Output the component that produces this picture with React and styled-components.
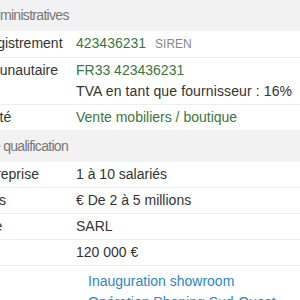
import React from "react";
import styled, { createGlobalStyle } from "styled-components";

const GlobalStyle = createGlobalStyle`
    html, body {
        margin: 0;
        padding: 0;
        background: #fff;
        overflow: hidden;
    }
    body {
        font-family: "Liberation Sans", Arial, Helvetica, sans-serif;
        font-size: 14px;
        line-height: 21px;
        color: #333;
    }
`;

const Sheet = styled.div`
    margin-left: -103px;
    width: 420px;
`;

const SectionHeader = styled.div`
    background: #f2f2f2;
    color: #777;
    font-size: 14px;
    letter-spacing: -0.7px;
    padding: 5px 17px;
    line-height: 21px;
    white-space: nowrap;
`;

const Row = styled.div`
    display: grid;
    grid-template-columns: 171px 1fr;
    border-bottom: 1px solid #eeeeee;
`;

const Label = styled.div`
    padding: 2px 8px;
    white-space: nowrap;
`;

const Value = styled.div`
    padding: 2px 8px;
    white-space: nowrap;
    color: ${(p) => (p.$green ? "#3c763d" : "#333")};
`;

const Muted = styled.span`
    margin-left: 9px;
    font-size: 12px;
    color: #888;
`;

const Plain = styled.div`
    color: #333;
    letter-spacing: 0.12px;
`;

const LinkList = styled.ul`
    margin: 0;
    padding: 3px 0 0 12px;
    list-style: none;
`;

const NewsLink = styled.a`
    color: #2a86c8;
    text-decoration: none;
`;

function App() {
    return (
        <>
            <GlobalStyle />
            <Sheet>
                <SectionHeader>Informations administratives</SectionHeader>
                <Row>
                    <Label>Numéro d'enregistrement</Label>
                    <Value $green>
                        423436231<Muted>SIREN</Muted>
                    </Value>
                </Row>
                <Row>
                    <Label>TVA intracommunautaire</Label>
                    <Value $green>
                        FR33 423436231
                        <Plain>TVA en tant que fournisseur : 16%</Plain>
                    </Value>
                </Row>
                <Row>
                    <Label>Secteur d'activité</Label>
                    <Value $green>Vente mobiliers / boutique</Value>
                </Row>
                <SectionHeader>Informations de qualification</SectionHeader>
                <Row>
                    <Label>Effectif de l'entreprise</Label>
                    <Value>1 à 10 salariés</Value>
                </Row>
                <Row>
                    <Label>Chiffre d'affaires</Label>
                    <Value>€ De 2 à 5 millions</Value>
                </Row>
                <Row>
                    <Label>Forme juridique</Label>
                    <Value>SARL</Value>
                </Row>
                <Row>
                    <Label>Capital social</Label>
                    <Value>120 000 €</Value>
                </Row>
                <Row>
                    <Label>Actualités</Label>
                    <Value>
                        <LinkList>
                            <li>
                                <NewsLink href="#">Inauguration showroom</NewsLink>
                            </li>
                            <li>
                                <NewsLink href="#">Opération Phoning Sud-Ouest</NewsLink>
                            </li>
                        </LinkList>
                    </Value>
                </Row>
            </Sheet>
        </>
    );
}

export default App;
